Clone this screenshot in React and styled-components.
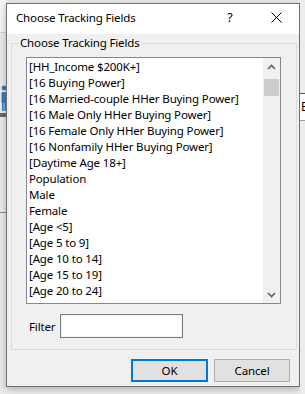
import React from "react";
import styled, { createGlobalStyle } from "styled-components";

const Global = createGlobalStyle`
  html, body { margin: 0; padding: 0; }
  body {
    width: 305px;
    height: 394px;
    overflow: hidden;
    background: #ececec;
    font-family: "Noto Sans", "Segoe UI", sans-serif;
    font-size: 11.5px;
    letter-spacing: -0.15px;
    color: #000;
  }
`;

const Page = styled.div`
  width: 305px;
  height: 394px;
  display: flex;
  align-items: flex-start;
`;

const Strip = styled.div`
  width: ${(p) => p.$w}px;
  height: 394px;
  flex: none;
  display: flex;
  flex-direction: column;
  overflow: hidden;
`;

const StripBlock = styled.div`
  height: ${(p) => p.$h}px;
  flex: none;
  background: ${(p) => p.$bg || "transparent"};
  border-top: ${(p) => (p.$line ? `1px solid ${p.$line}` : "none")};
  color: #000;
  font-size: 12px;
  padding-left: 1px;
  line-height: ${(p) => p.$h}px;
  white-space: nowrap;
`;

const Dialog = styled.div`
  margin-top: 3px;
  width: 294px;
  height: 384px;
  flex: none;
  box-sizing: border-box;
  border: 1px solid #6f6f6f;
  background: #f0f0f0;
  box-shadow: 0 2px 8px rgba(0, 0, 0, 0.28);
  display: flex;
  flex-direction: column;
`;

const TitleBar = styled.div`
  height: 30px;
  flex: none;
  background: #fff;
  display: flex;
  align-items: center;
`;

const TitleText = styled.div`
  flex: 1;
  padding-left: 9px;
  padding-bottom: 3px;
  white-space: nowrap;
`;

const CaptionButton = styled.div`
  width: 46px;
  height: 30px;
  display: flex;
  align-items: center;
  justify-content: center;
  padding-bottom: 3px;
  box-sizing: border-box;
  font-size: 12.5px;
  color: #000;
`;

const Body = styled.div`
  flex: 1;
  padding: 1px 2px 0 4px;
  display: flex;
  flex-direction: column;
`;

const Group = styled.fieldset`
  margin: 0;
  border: 1px solid #dcdcdc;
  padding: 6px 15px 11px 14px;
  min-width: 0;
`;

const GroupLabel = styled.legend`
  margin-left: -8px;
  padding: 0 2px;
  line-height: 16px;
  white-space: nowrap;
`;

const ListBox = styled.div`
  width: 255px;
  height: 247px;
  box-sizing: border-box;
  border: 1px solid #828790;
  background: #fff;
  display: flex;
`;

const Items = styled.div`
  flex: 1;
  overflow: hidden;
  padding: 1px 0 0 2px;
`;

const Item = styled.div`
  height: 16px;
  line-height: 16px;
  white-space: nowrap;
`;

const ScrollBar = styled.div`
  width: 17px;
  flex: none;
  background: #f0f0f0;
  display: flex;
  flex-direction: column;
`;

const ScrollArrow = styled.div`
  height: 17px;
  flex: none;
  display: flex;
  align-items: center;
  justify-content: center;
`;

const Track = styled.div`
  flex: 1;
  padding-top: ${(p) => p.$offset}px;
  display: flex;
  flex-direction: column;
  align-items: center;
`;

const Thumb = styled.div`
  width: 15px;
  height: 17px;
  background: #cdcdcd;
`;

const FilterRow = styled.div`
  margin-top: 10px;
  padding-left: 3px;
  display: flex;
  align-items: center;
  gap: 5px;
`;

const FilterLabel = styled.label``;

const FilterInput = styled.div`
  width: 123px;
  height: 24px;
  box-sizing: border-box;
  border: 1px solid #7a7a7a;
  background: #fff;
  box-shadow: inset 0 0 0 1px #f4f4f4;
`;

const ButtonRow = styled.div`
  margin-top: 9px;
  padding-right: 7px;
  display: flex;
  justify-content: flex-end;
  gap: 6px;
`;

const Button = styled.div`
  width: ${(p) => p.$w}px;
  height: 23px;
  box-sizing: border-box;
  background: #e1e1e1;
  border: ${(p) => (p.$default ? "2px solid #0078d7" : "1px solid #adadad")};
  display: flex;
  align-items: center;
  justify-content: center;
`;

const Chevron = ({ up }) => (
  <svg width="9" height="6" viewBox="0 0 9 6">
    <path
      d={up ? "M1 5 L4.5 1.5 L8 5" : "M1 1 L4.5 4.5 L8 1"}
      fill="none"
      stroke="#606060"
      strokeWidth="1.6"
    />
  </svg>
);

const CloseIcon = () => (
  <svg width="11" height="11" viewBox="0 0 11 11">
    <path d="M0.5 0.5 L10.5 10.5 M10.5 0.5 L0.5 10.5" stroke="#000" strokeWidth="1" />
  </svg>
);

const PeopleIcon = () => (
  <svg width="6" height="30" viewBox="0 0 6 30">
    <circle cx="3" cy="5" r="2.4" fill="#2f7fc1" />
    <rect x="0.5" y="9" width="5" height="11" rx="1.5" fill="#2f7fc1" />
    <rect x="1" y="19" width="1.6" height="9" fill="#2f7fc1" />
    <rect x="3.4" y="19" width="1.6" height="9" fill="#2f7fc1" />
  </svg>
);

const items = [
  "[HH_Income $200K+]",
  "[16 Buying Power]",
  "[16 Married-couple HHer Buying Power]",
  "[16 Male Only HHer Buying Power]",
  "[16 Female Only HHer Buying Power]",
  "[16 Nonfamily HHer Buying Power]",
  "[Daytime Age 18+]",
  "Population",
  "Male",
  "Female",
  "[Age <5]",
  "[Age 5 to 9]",
  "[Age 10 to 14]",
  "[Age 15 to 19]",
  "[Age 20 to 24]",
];

export default function App() {
  return (
    <>
      <Global />
      <Page>
        <Strip $w={6}>
          <StripBlock $h={32} $bg="#f7f7f7" />
          <StripBlock $h={50} $bg="#ececec" $line="#d4d4d4" />
          <StripBlock $h={30} $bg="#ececec">
            <PeopleIcon />
          </StripBlock>
          <StripBlock $h={4} $bg="#6a6a6a" />
          <StripBlock $h={95} $bg="#ececec" />
          <StripBlock $h={183} $bg="#ececec" $line="#8a8a8a" />
        </Strip>
        <Dialog>
          <TitleBar>
            <TitleText>Choose Tracking Fields</TitleText>
            <CaptionButton>?</CaptionButton>
            <CaptionButton>
              <CloseIcon />
            </CaptionButton>
          </TitleBar>
          <Body>
            <Group>
              <GroupLabel>Choose Tracking Fields</GroupLabel>
              <ListBox>
                <Items>
                  {items.map((t) => (
                    <Item key={t}>{t}</Item>
                  ))}
                </Items>
                <ScrollBar>
                  <ScrollArrow>
                    <Chevron up />
                  </ScrollArrow>
                  <Track $offset={4}>
                    <Thumb />
                  </Track>
                  <ScrollArrow>
                    <Chevron />
                  </ScrollArrow>
                </ScrollBar>
              </ListBox>
              <FilterRow>
                <FilterLabel>Filter</FilterLabel>
                <FilterInput />
              </FilterRow>
            </Group>
            <ButtonRow>
              <Button $w={77} $default>
                OK
              </Button>
              <Button $w={76}>Cancel</Button>
            </ButtonRow>
          </Body>
        </Dialog>
        <Strip $w={5}>
          <StripBlock $h={93} $bg="#ececec" />
          <StripBlock $h={26} $bg="#ffffff" $line="#555">
            E
          </StripBlock>
          <StripBlock $h={275} $bg="#ececec" $line="#9a9a9a" />
        </Strip>
      </Page>
    </>
  );
}
